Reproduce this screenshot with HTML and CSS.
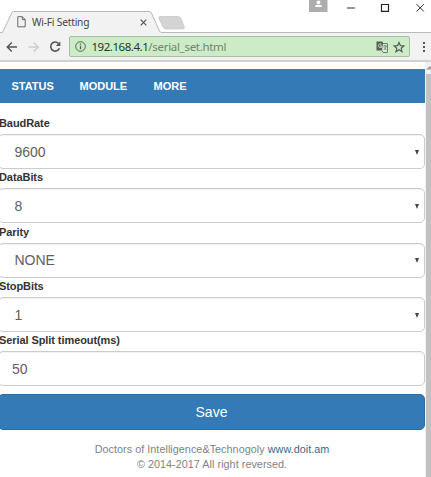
FILE: index.html
```html
<!DOCTYPE html>
<html lang="en">
<head>
<meta charset="utf-8">
<title>Wi-Fi Setting</title>
<link rel="stylesheet" href="styles.css">
</head>
<body>
<div class="browser">
  <header class="tabstrip">
    <svg class="tab-shape" width="431" height="33" viewBox="0 0 431 33">
      <path d="M0 33V32.5H2.5L12 12.5Q12.700 11.500 14 11.500H149Q150.500 11.500 151.200 12.500L159.500 31Q160 32.500 162 32.500H431V33Z" fill="#f2f2f2"/>
      <path d="M0 32.500H2.500L12 12.500Q12.700 11.500 14 11.500H149Q150.500 11.500 151.200 12.500L159.500 31Q160 32.500 162 32.500H431" fill="none" stroke="#b9b9b9"/>
      <path d="M160 16.500H178Q180 16.500 180.800 18L184.300 27Q184.800 29 183 29H166Q164 29 163 27L158.800 18Q158.500 16.500 160 16.500Z" fill="#d4d4d4" stroke="#c6c6c6" stroke-width=".7"/>
    </svg>
    <div class="tab">
      <svg width="9" height="12" viewBox="0 0 9 12" fill="none" stroke="#686868"><path d="M.8.700H5.300L8.200 3.600V10.800H.8ZM5.300.700V3.600H8.200"/></svg>
      <span class="tab-title">Wi-Fi Setting</span>
      <svg width="7" height="7" viewBox="0 0 7 7" stroke="#555" stroke-width="1.200"><path d="M.7.700 6.300 6.300M6.300.700.7 6.300"/></svg>
    </div>
    <div class="window-controls">
      <svg width="122" height="17" viewBox="0 0 122 17" fill="none">
        <path d="M0 0H18.500V12H0Z" fill="#adadad"/>
        <circle cx="9.500" cy="2.300" r="1.900" fill="#fff"/>
        <path d="M6 7V6.200Q6.500 4.800 9.500 4.800T13 6.200V7Z" fill="#fff"/>
        <path d="M38 8H46" stroke="#555" stroke-width="1.200"/>
        <path d="M72.500 4.500H79.500V11.300H72.500Z" stroke="#222" stroke-width="1.200"/>
        <path d="M107.500 4.200 114.800 11.500M114.800 4.200 107.500 11.500" stroke="#333"/>
      </svg>
    </div>
  </header>
  <div class="toolbar">
    <svg class="nav-icons" width="69" height="28" viewBox="0 0 69 28" fill="none" stroke-width="1.500">
      <path d="M17 14H7.500M11.800 9.500 7.300 14 11.800 18.500" stroke="#555"/>
      <path d="M28.500 14H38M33.700 9.500 38.200 14 33.700 18.500" stroke="#ccc"/>
      <path d="M58.500 10.500A4.500 4.500 0 1 0 59.400 15.200" stroke="#555" stroke-width="1.600"/>
      <path d="M60.300 8.500V13H55.800Z" fill="#555"/>
    </svg>
    <div class="address">
      <svg width="11" height="11" viewBox="0 0 11 11" fill="none" stroke="#536553"><circle cx="5.500" cy="5.500" r="4.800"/><path d="M5.500 4.800V8.300M5.500 2.500V3.800" stroke-width="1.300"/></svg>
      <span class="url">192.168.4.1<span class="path">/serial_set.html</span></span>
      <svg class="actions" width="30" height="14" viewBox="0 0 30 14" fill="none">
        <path d="M.5 1.500H6.500L9.500 10.500H.5Z" fill="#526352"/>
        <path d="M7 3.500H11.500V12.500H7L6 10.500" stroke="#6d806d" fill="#d9edd5"/>
        <path d="M5.400 4.200Q3.200 2.800 2.400 5.500 2.300 8.200 5.800 7.400V5.800H4" stroke="#cdebc6" stroke-width=".9"/>
        <path d="M7.200 6H10.800M9 4.800V6M10.300 6Q9.900 8.500 7.700 10M8 7.300 10.500 10" stroke="#617161" stroke-width=".8"/>
        <path d="m23 2.400 1.400 3.200 3.500.3-2.700 2.300.8 3.500-3-1.900-3 1.900.8-3.500-2.700-2.300 3.500-.3Z" stroke="#4d5f4d" stroke-width="1.150"/>
      </svg>
    </div>
    <svg class="menu-icon" width="4" height="12" viewBox="0 0 4 12" fill="#555"><path d="M1 1h2v2H1ZM1 5h2v2H1ZM1 9h2v2H1Z"/></svg>
  </div>
  <div class="viewport">
    <main class="page">
      <nav class="navbar"><a class="status">STATUS</a><a class="module">MODULE</a><a class="more">MORE</a></nav>
      <form class="settings">
        <div class="field"><label>BaudRate</label><div class="control select"><span>9600</span><i class="arrow"></i></div></div>
        <div class="field"><label>DataBits</label><div class="control select"><span>8</span><i class="arrow"></i></div></div>
        <div class="field"><label>Parity</label><div class="control select"><span>NONE</span><i class="arrow"></i></div></div>
        <div class="field"><label>StopBits</label><div class="control select"><span>1</span><i class="arrow"></i></div></div>
        <div class="field"><label class="timeout">Serial Split timeout(ms)</label><div class="control"><span>50</span></div></div>
        <button class="save" type="button">Save</button>
      </form>
      <footer><p>Doctors of Intelligence&amp;Technogoly <a>www.doit.am</a></p><p class="copyright">© 2014-2017 All right reversed.</p></footer>
    </main>
    <div class="scrollbar"><div class="scroll-up"><svg width="5" height="4" viewBox="0 0 5 4"><path d="M0 3.500 4 0 5 1V3.500Z" fill="#999"/></svg></div><div class="thumb"></div></div>
  </div>
</div>
</body>
</html>
```
FILE: styles.css
```css
* { box-sizing: border-box; }
body { margin: 0; background: #fff; font-family: "Liberation Sans", Arial, sans-serif; }
.browser { width: 431px; height: 477px; overflow: hidden; }
.tabstrip { position: relative; height: 33px; display: flex; justify-content: space-between; }
.tab-shape { position: absolute; left: 0; top: 0; }
.tab { position: relative; display: flex; align-items: center; width: 147px; height: 22px; margin-top: 11px; padding-left: 17px; }
.tab-title { width: 99px; margin: 0 9px 0 6px; color: #444; font: 10.2px/16px "Noto Sans", sans-serif; letter-spacing: -0.200px; white-space: nowrap; }
.tab svg { flex: none; }
.window-controls { position: relative; width: 122px; height: 17px; }
.toolbar { display: flex; height: 29px; background: #f2f2f2; border-bottom: 2px solid #d1d1d1; }
.nav-icons { flex: none; }
.address { display: flex; align-items: center; width: 341px; height: 21px; margin-top: 3px; padding-left: 5px; background: #cdebc6; border: 1px solid #a9bea5; border-radius: 2px; }
.url { margin-left: 5.500px; color: #263626; font: 11.5px/19px "Noto Sans", sans-serif; letter-spacing: -0.460px; white-space: nowrap; }
.path { color: #71856e; letter-spacing: -0.300px; }
.actions { margin: 0 3px 0 auto; }
.menu-icon { margin: 8px 0 0 12px; }
.viewport { display: flex; height: 415px; }
.page { width: 425px; padding-top: 7px; overflow: hidden; }
.navbar { display: flex; align-items: center; height: 34px; padding-left: 11.500px; background: #347ab6; color: #fff; font-size: 11px; font-weight: bold; }
.status { width: 68px; }
.module { width: 74px; }
.settings { padding-top: 12px; }
.field { height: 54.300px; }
.field label { display: block; height: 19.200px; margin-left: -1px; color: #333; font-size: 11px; line-height: 16px; font-weight: bold; letter-spacing: -0.080px; white-space: nowrap; }
.control { display: flex; align-items: center; justify-content: space-between; height: 35px; margin-left: -2px; padding: 1px 5px 0 13px; border: 1px solid #ccc; border-radius: 5px; color: #606060; font-size: 14px; line-height: 17px; box-shadow: inset 0 1px 1px #f2f2f2; }
.select { padding-left: 15.500px; }
.arrow { width: 0; height: 0; border: 2.500px solid transparent; border-top: 5px solid #444; border-bottom: 0; }
.save { display: block; width: 427px; height: 36px; margin: 7.500px 0 0 -2px; padding: 0; border: 1px solid #2d6da3; border-radius: 5px; background: #347ab6; color: #fff; font: 14px/34px "Liberation Sans", sans-serif; }
footer { margin-top: 12px; color: #828282; font-size: 10.800px; line-height: 15px; text-align: center; white-space: nowrap; }
footer p { margin: 0 0 0 -1px; letter-spacing: 0.040px; }
footer a { color: #396988; }
.scrollbar { width: 6px; background: #f1f1f1; }
.scroll-up { display: flex; align-items: center; justify-content: flex-end; height: 12px; }
.thumb { height: 403px; margin-left: 1px; background: #c1c1c1; }
```
